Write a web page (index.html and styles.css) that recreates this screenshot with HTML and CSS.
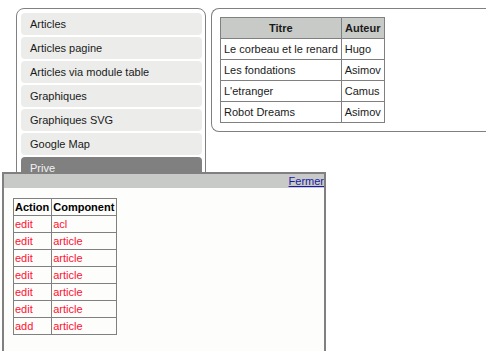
FILE: index.html
```html
<!DOCTYPE html>
<html lang="fr">
<head>
    <meta charset="UTF-8">
    <title>Articles</title>
    <link rel="stylesheet" href="styles.css">
</head>
<body>
    <div class="layout">
        <div class="menu">
            <a class="menu-item" href="#">Articles</a>
            <a class="menu-item" href="#">Articles pagine</a>
            <a class="menu-item" href="#">Articles via module table</a>
            <a class="menu-item" href="#">Graphiques</a>
            <a class="menu-item" href="#">Graphiques SVG</a>
            <a class="menu-item" href="#">Google Map</a>
            <a class="menu-item active" href="#">Prive</a>
        </div>

        <div class="content">
            <table class="books">
                <tr><th>Titre</th><th>Auteur</th></tr>
                <tr><td>Le corbeau et le renard</td><td>Hugo</td></tr>
                <tr><td>Les fondations</td><td>Asimov</td></tr>
                <tr><td>L'etranger</td><td>Camus</td></tr>
                <tr><td>Robot Dreams</td><td>Asimov</td></tr>
            </table>
        </div>
    </div>

    <div class="dialog">
        <div class="dialog-bar"><a href="#">Fermer</a></div>
        <table class="acl">
            <tr><th>Action</th><th>Component</th></tr>
            <tr><td>edit</td><td>acl</td></tr>
            <tr><td>edit</td><td>article</td></tr>
            <tr><td>edit</td><td>article</td></tr>
            <tr><td>edit</td><td>article</td></tr>
            <tr><td>edit</td><td>article</td></tr>
            <tr><td>edit</td><td>article</td></tr>
            <tr><td>add</td><td>article</td></tr>
        </table>
    </div>
</body>
</html>
```

FILE: styles.css
```css
:root {
    --border-color: #808080;
    --bar-color: #c8cac7;
    --item-color: #ecedea;
    --text-color: #1a1a1a;
}

* {
    margin: 0;
    padding: 0;
    box-sizing: border-box;
}

html, body {
    height: 100%;
    overflow: hidden;
}

body {
    font-family: "Liberation Sans", Arial, sans-serif;
    font-size: 11px;
    color: var(--text-color);
    background: #fff;
    padding: 8px 0 0 16px;
}

.layout {
    display: flex;
    gap: 5px;
    align-items: flex-start;
}

.menu {
    width: 190px;
    height: 300px;
    flex: none;
    border: 1px solid var(--border-color);
    border-radius: 8px;
    padding: 4px 3px 0 4px;
    display: flex;
    flex-direction: column;
    gap: 2px;
}

.menu-item {
    display: block;
    height: 22px;
    line-height: 22px;
    padding-left: 9px;
    background: var(--item-color);
    border-radius: 4px;
    color: var(--text-color);
    text-decoration: none;
}

.menu-item.active {
    background: #808080;
    color: #f2f2f2;
}

.content {
    flex: 1;
    height: 124px;
    border: 1px solid var(--border-color);
    border-right: none;
    border-radius: 8px 0 0 8px;
    padding: 8px;
}

.books {
    border-collapse: collapse;
}

.books th,
.books td {
    border: 1px solid var(--border-color);
    height: 21px;
    padding: 0 3px;
    white-space: nowrap;
}

.books th {
    background: var(--bar-color);
    text-align: center;
}

.dialog {
    position: absolute;
    left: 2px;
    top: 172px;
    width: 324px;
    height: 179px;
    background: #fdfdfc;
    border: 2px solid var(--border-color);
    border-bottom: none;
}

.dialog-bar {
    background: var(--bar-color);
    height: 14px;
    line-height: 14px;
    text-align: right;
}

.dialog-bar a {
    color: #1a1aa6;
}

.acl {
    border-collapse: collapse;
    margin: 10px 0 0 9px;
}

.acl th,
.acl td {
    border: 1px solid var(--border-color);
    height: 17px;
    padding: 0 2px 0 1px;
    white-space: nowrap;
    text-align: left;
}

.acl th {
    color: #000;
}

.acl td {
    color: #ff1030;
}
```
